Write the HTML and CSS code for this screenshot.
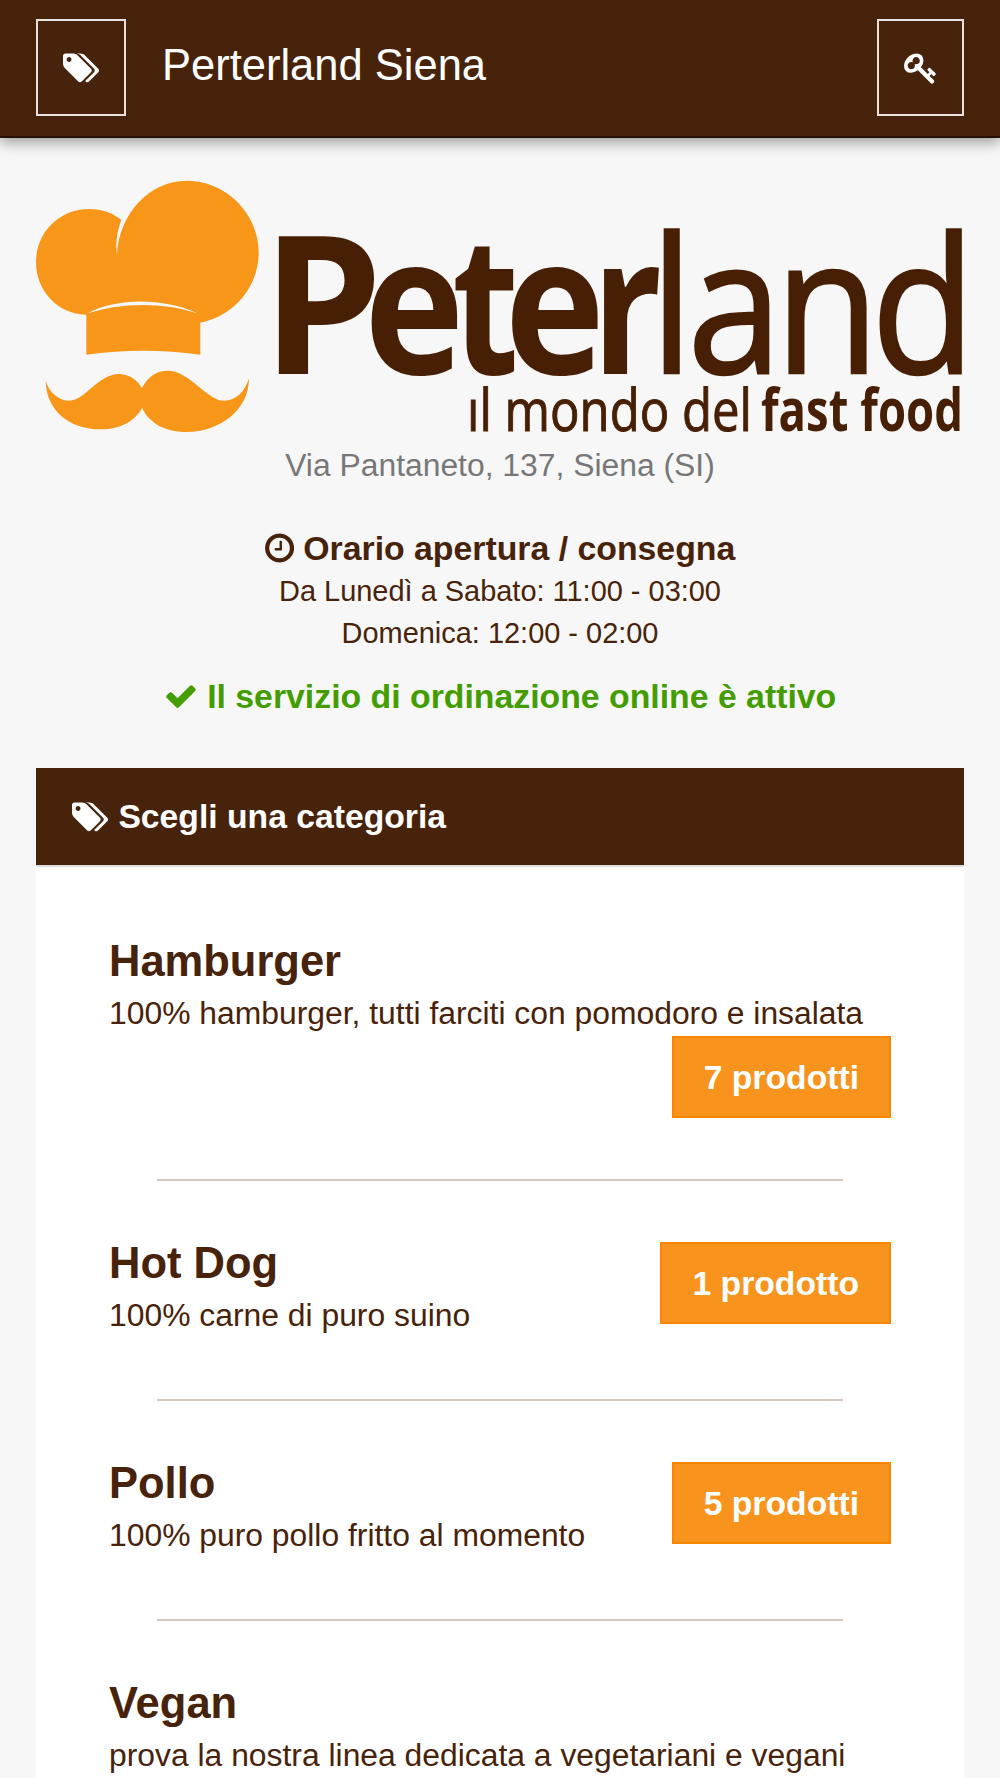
FILE: index.html
```html
<!DOCTYPE html>
<html lang="it">
<head>
    <meta charset="UTF-8">
    <meta name="viewport" content="width=device-width, initial-scale=1.0">
    <title>Perterland Siena</title>
    <link rel="stylesheet" href="styles.css">
</head>
<body>
    <header class="navbar">
        <a class="nav-button nav-tags" href="#categorie">
            <svg class="icon icon-tags" viewBox="0 0 1920 1792"><path d="M448 448q0-53-37.500-90.500t-90.500-37.500-90.500 37.500-37.500 90.500 37.500 90.500 90.500 37.500 90.500-37.500 37.500-90.500zm1067 576q0 53-37 90l-491 492q-39 37-91 37-53 0-90-37l-715-716q-38-37-64.500-101t-26.500-117v-416q0-52 38-90t90-38h416q53 0 117 26.500t102 64.500l715 714q37 39 37 91zm384 0q0 53-37 90l-491 492q-39 37-91 37-36 0-59-14t-53-45l470-470q37-37 37-90 0-52-37-91l-715-714q-38-38-102-64.500t-117-26.500h224q53 0 117 26.500t102 64.500l715 714q37 39 37 91z"/></svg>
        </a>
        <h1 class="navbar-title">Perterland Siena</h1>
        <a class="nav-button nav-login" href="#login">
            <svg class="icon" viewBox="0 0 1792 1792"><path d="M832 512q0-80-56-136t-136-56-136 56-56 136q0 42 19 83-41-19-83-19-80 0-136 56t-56 136 56 136 136 56 136-56 56-136q0-42-19-83 41 19 83 19 80 0 136-56t56-136zm851 704q0 17-49 66t-66 49q-9 0-28.500-16t-36.500-33-38.500-40-24.500-26l-96 96 220 220q28 28 28 68 0 42-39 81t-81 39q-40 0-68-28l-671-671q-176 131-365 131-163 0-265.500-102.500t-102.500-265.500q0-160 95-313t248-248 313-95q163 0 265.500 102.500t102.500 265.500q0 189-131 365l355 355 96-96q-3-3-26-24.500t-40-38.500-33-36.500-16-28.500q0-17 49-66t66-49q13 0 23 10 6 6 46 44.500t82 79.500 86.500 86 73 78 28.500 41z"/></svg>
        </a>
    </header>

    <main class="container">
        <svg class="logo" viewBox="36 181 928 252">
            <!-- Chef hat and moustache -->
            <g transform="translate(20 160) scale(.33333)">
                <path class="logo-orange" d="M304 180C278 158 244 147 207 147C118 147 48 218 48 306C48 392 112 462 199 464L199 584Q370 560 541 584L541 488C640 470 716 382 716 278C716 160 618 62 500 62C390 62 296 160 291 285C285 250 292 210 304 180Z"/>
                <path class="logo-gap" d="M203 460C290 413 430 413 532 460C430 427 310 426 203 460Z"/>
                <path class="logo-orange" d="M77 662C88 700 120 722 148 722C195 722 235 642 296 642C325 642 352 658 366 685C382 650 410 632 443 632C510 632 560 722 612 722C648 722 675 695 687 655C687 750 600 816 500 816C430 816 385 785 366 743C348 782 300 808 245 808C140 808 78 745 77 662Z"/>
            </g>
            <text class="logo-name bold" x="261.500" y="374">P</text>
            <text class="logo-name bold" transform="translate(364 374) scale(.88 1)">e</text>
            <text class="logo-name bold" transform="translate(452 374) scale(.8 1)">t</text>
            <text class="logo-name bold" transform="translate(504.500 374) scale(.88 1)">e</text>
            <text class="logo-name bold" transform="translate(592 374) scale(.8 1)">r</text>
            <text class="logo-name light" transform="scale(.9 1)" x="722.500 764 861 968" y="373">land</text>
            <text class="logo-claim light" x="467" y="431" textLength="285" lengthAdjust="spacingAndGlyphs">ıl mondo del</text>
            <text class="logo-claim bold" x="761" y="431" textLength="202" lengthAdjust="spacingAndGlyphs">fast food</text>
        </svg>
        <p class="address">Via Pantaneto, 137, Siena (SI)</p>

        <section class="hours">
            <h2 class="hours-title">
                <svg class="icon icon-narrow" viewBox="128 0 1536 1792"><path d="M1024 544v448q0 14-9 23t-23 9h-320q-14 0-23-9t-9-23v-64q0-14 9-23t23-9h224v-352q0-14 9-23t23-9h64q14 0 23 9t9 23zm416 352q0-148-73-273t-198-198-273-73-273 73-198 198-73 273 73 273 198 198 273 73 273-73 198-198 73-273zm224 0q0 209-103 385.500t-279.500 279.500-385.500 103-385.500-103-279.500-279.500-103-385.500 103-385.500 279.500-279.500 385.500-103 385.500 103 279.500 279.500 103 385.500z"/></svg>
                Orario apertura / consegna
            </h2>
            <p>Da Lunedì a Sabato: 11:00 - 03:00</p>
            <p>Domenica: 12:00 - 02:00</p>
        </section>

        <p class="status">
            <svg class="icon" viewBox="0 0 1792 1792"><path d="M1671 566q0 40-28 68l-724 724-136 136q-28 28-68 28t-68-28l-136-136-362-362q-28-28-28-68t28-68l136-136q28-28 68-28t68 28l294 295 656-657q28-28 68-28t68 28l136 136q28 28 28 68z"/></svg>
            Il servizio di ordinazione online è attivo
        </p>

        <section class="panel" id="categorie">
            <h2 class="panel-heading">
                <svg class="icon icon-tags" viewBox="0 0 1920 1792"><path d="M448 448q0-53-37.500-90.500t-90.500-37.500-90.500 37.500-37.500 90.500 37.500 90.500 90.500 37.500 90.500-37.500 37.500-90.500zm1067 576q0 53-37 90l-491 492q-39 37-91 37-53 0-90-37l-715-716q-38-37-64.500-101t-26.500-117v-416q0-52 38-90t90-38h416q53 0 117 26.500t102 64.500l715 714q37 39 37 91zm384 0q0 53-37 90l-491 492q-39 37-91 37-36 0-59-14t-53-45l470-470q37-37 37-90 0-52-37-91l-715-714q-38-38-102-64.500t-117-26.500h224q53 0 117 26.500t102 64.500l715 714q37 39 37 91z"/></svg>
                Scegli una categoria
            </h2>
            <div class="panel-body">
                <div class="category wrapped">
                    <div>
                        <h3>Hamburger</h3>
                        <p>100% hamburger, tutti farciti con pomodoro e insalata</p>
                    </div>
                    <a class="count" href="#hamburger">7 prodotti</a>
                </div>
                <hr>
                <div class="category">
                    <div>
                        <h3>Hot Dog</h3>
                        <p>100% carne di puro suino</p>
                    </div>
                    <a class="count" href="#hotdog">1 prodotto</a>
                </div>
                <hr>
                <div class="category">
                    <div>
                        <h3>Pollo</h3>
                        <p>100% puro pollo fritto al momento</p>
                    </div>
                    <a class="count" href="#pollo">5 prodotti</a>
                </div>
                <hr>
                <div class="category">
                    <div>
                        <h3>Vegan</h3>
                        <p>prova la nostra linea dedicata a vegetariani e vegani</p>
                    </div>
                </div>
            </div>
        </section>
    </main>
</body>
</html>
```
FILE: styles.css
```css
* {
    box-sizing: border-box;
}

body {
    margin: 0;
    height: 100vh;
    overflow: hidden;
    background-color: #f7f7f7;
    color: #48230b;
    font-family: "Liberation Sans", Arial, sans-serif;
    font-size: 33.7px;
}

h1, h2, h3, p {
    margin: 0;
}

.icon {
    width: 34px;
    height: 34px;
    fill: currentColor;
    flex: none;
}

.icon-tags {
    width: 36.4px;
}

.icon-narrow {
    width: 29.1px;
}

/* Top bar */
.navbar {
    display: flex;
    height: 138px;
    padding: 19px 36px 0;
    background-color: #48230b;
    border-bottom: 2px solid #2a1000;
    box-shadow: 0 4px 14px rgba(0, 0, 0, 0.4);
    color: #fff;
}

.nav-button {
    display: flex;
    align-items: center;
    justify-content: center;
    height: 97px;
    border: 2px solid #e7e2df;
    color: #fff;
}

.nav-tags {
    width: 90px;
}

.nav-login {
    width: 87px;
}

.navbar-title {
    flex: 1;
    margin-left: 36px;
    font-size: 43.5px;
    font-weight: normal;
    line-height: 92px;
}

.container {
    padding: 43px 36px 0;
}

/* Logo */
.logo {
    display: block;
    width: 928px;
    height: 252px;
    overflow: visible;
}

.logo text {
    fill: #471f04;
    font-family: "Open Sans", "Noto Sans", sans-serif;
}

.logo .logo-name {
    font-size: 193px;
}

.logo .logo-claim {
    font-size: 59px;
}

.logo .bold {
    font-weight: bold;
}

.logo .light {
    stroke: #471f04;
    stroke-width: 1px;
}

.logo .logo-name.light {
    font-size: 189px;
    stroke-width: 2.5px;
}

.logo-orange {
    fill: #f89619;
}

.logo-gap {
    fill: #f7f7f7;
}

.address {
    margin-top: 10px;
    color: #777;
    font-size: 31.85px;
    line-height: 45px;
    text-align: center;
}

/* Opening hours */
.hours {
    margin-top: 38px;
    font-size: 28.95px;
    line-height: 41.6px;
    text-align: center;
}

.hours-title, .status {
    display: flex;
    align-items: center;
    justify-content: center;
    gap: 9.4px;
    font-size: 33.8px;
    font-weight: bold;
    line-height: 44px;
}

.hours-title {
    padding-bottom: 1px;
}

.status {
    margin-top: 20px;
    color: #449d00;
}

/* Category list */
.panel {
    margin-top: 50px;
    background-color: #fff;
}

.panel-heading {
    display: flex;
    align-items: center;
    gap: 10px;
    height: 99px;
    padding: 0 36px;
    background-color: #48230b;
    border-bottom: 2px solid #ddd;
    color: #fff;
    font-size: 33.7px;
}

.panel-body {
    padding: 12px 73px 0;
}

.category {
    display: flex;
    flex-wrap: wrap;
    align-items: flex-start;
    justify-content: space-between;
    padding: 58px 0 61.5px;
}

.category h3 {
    margin-bottom: 5.5px;
    font-size: 43.5px;
    line-height: 48px;
}

.category p {
    font-size: 31.85px;
    line-height: 45px;
}

.count {
    margin: 3px 0 0 auto;
    padding: 0 30px;
    background-color: #f8941d;
    border: 2px solid #f78603;
    color: #fff;
    font-weight: bold;
    line-height: 78px;
    text-decoration: none;
}

.wrapped .count {
    margin-top: 0;
}

hr {
    height: 2px;
    margin: 0 48px;
    border: none;
    background-color: #d1c8c2;
}
```
